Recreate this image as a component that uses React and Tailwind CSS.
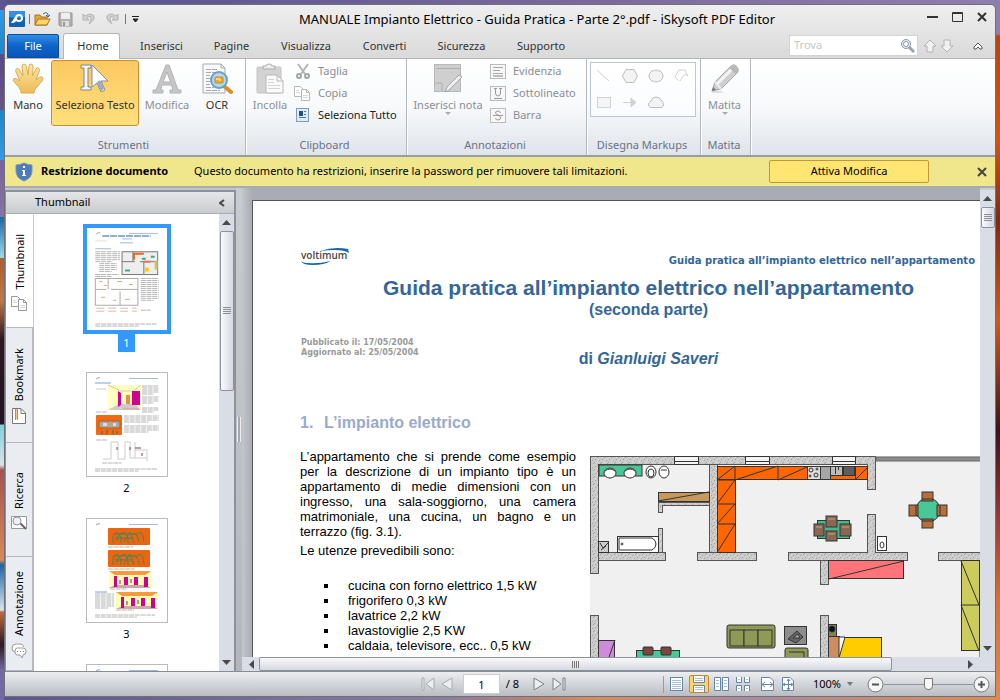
import { useState } from "react";

/* ---------------- DATA ---------------- */
const tabs = [
  { label: "Inserisci", width: "w-[73px]" },
  { label: "Pagine", width: "w-[67px]" },
  { label: "Visualizza", width: "w-[82px]" },
  { label: "Converti", width: "w-[75px]" },
  { label: "Sicurezza", width: "w-[79px]" },
  { label: "Supporto", width: "w-[80px]" },
];

const consumers = [
  "cucina con forno elettrico 1,5 kW",
  "frigorifero 0,3 kW",
  "lavatrice 2,2 kW",
  "lavastoviglie 2,5 KW",
  "caldaia, televisore, ecc.. 0,5 kW",
];

/* ---------------- TITLE BAR ICONS ---------------- */
const AppLogo = () => (
  <svg width="16" height="16" viewBox="0 0 16 16">
    <rect width="16" height="16" rx="1" fill="#1260b4" />
    <path d="M0 0H16V6Q8 8 0 6Z" fill="#3a8fd8" />
    <path
      d="M2 12L6 6Q7 3 10 3Q14 3 14 7Q14 11 10 11Q8 11 7 10Q6 12 2 12ZM8 8Q9 9 10 9Q12 9 12 7Q12 5 10 5Q8 5 8 8Z"
      fill="#fff"
      fillRule="evenodd"
    />
  </svg>
);

const OpenIcon = () => (
  <svg width="17" height="16" viewBox="0 0 17 16">
    <path d="M1 14V4H6L7 6H13V14Z" fill="#e5a93a" stroke="#a8741a" />
    <path d="M1 14L4 8H16L13 14Z" fill="#fbd36f" stroke="#a8741a" />
    <path d="M9 3Q12 0 14 3V5M12 4L14 6L16 4" fill="none" stroke="#39659c" />
  </svg>
);

const SaveIcon = () => (
  <svg width="15" height="15" viewBox="0 0 15 15">
    <path d="M1 1H14V14H2L1 13Z" fill="#b2b2b2" stroke="#929292" />
    <rect x="3" y="1" width="9" height="6" fill="#eee" />
    <rect x="4" y="9" width="7" height="5" fill="#ddd" />
    <rect x="5" y="10" width="2" height="4" fill="#999" />
  </svg>
);

const UndoIcon = () => (
  <svg width="14" height="14" viewBox="0 0 14 14">
    <path d="M1 2V8H7L5 6Q9 3 9 6Q9 9 7 12Q13 8 12 4Q9 0 3 4Z" fill="#d0d0d0" stroke="#b4b4b4" />
  </svg>
);

const RedoIcon = () => (
  <svg width="14" height="14" viewBox="0 0 14 14">
    <path d="M13 2V8H7L9 6Q5 3 5 6Q5 9 7 12Q1 8 2 4Q5 0 11 4Z" fill="#d0d0d0" stroke="#b4b4b4" />
  </svg>
);

/* ---------------- RIBBON ICONS ---------------- */
const HandIcon = () => (
  <svg width="32" height="32" viewBox="0 0 32 32">
    <defs>
      <linearGradient id="hand" x1="0" y1="0" x2="0" y2="1">
        <stop offset="0" stopColor="#fbe6a4" />
        <stop offset="1" stopColor="#eebb55" />
      </linearGradient>
    </defs>
    <path
      d="M9 28Q7 23 3 20Q0 17 2 15.500Q4 14.500 8 18L4 9Q3 6 5 5.500Q7 5 8 8L11 13L10 4Q10 1 12 1Q14 1 14.500 4L16 12L17 3Q17 1 19 1Q21 1 21 4L20.500 13L24 6Q25 4 26.500 5Q28 6 27 9L24 17Q28 13 30 14Q32 15 30 18L24 25Q22 27 22 30H9Z"
      fill="url(#hand)"
      stroke="#d8ac55"
    />
  </svg>
);

const SelectTextIcon = () => (
  <svg width="32" height="32" viewBox="0 0 32 32">
    <path d="M2 2H12V5H9V24H12V27H2V24H5V5H2Z" fill="#f4f7fa" stroke="#7b8794" />
    <path d="M13 2V24L18 20L22 29L26 27L22 18H29Z" fill="#fff" stroke="#7e8ea1" />
    <path d="M18 19L22 28L25 26L21 17Z" fill="#9aabc0" />
  </svg>
);

const EditIcon = () => (
  <svg width="32" height="32" viewBox="0 0 32 32">
    <path
      d="M15 2H18L27 27H30V30H19V27H22L20.500 22H11L9.500 27H12V30H2V27H5ZM16 9L12 19H19.500Z"
      fill="#c6c6c6"
      stroke="#b2b2b2"
      fillRule="evenodd"
    />
  </svg>
);

const OcrIcon = () => (
  <svg width="32" height="32" viewBox="0 0 32 32">
    <path d="M2 1H20L24 5V30H2Z" fill="#f8f9fa" stroke="#a5a9ae" />
    <path d="M20 1V5H24" fill="none" stroke="#a5a9ae" />
    <path d="M5 6.500H17M5 9.500H20M5 12.500H9M5 15.500H9M5 18.500H9M5 21.500H9M5 24.500H13M5 27.500H19" stroke="#a8a8a8" strokeDasharray="5 1" />
    <path d="M23 23L30 29" stroke="#e08a2a" strokeWidth="4" strokeLinecap="round" />
    <circle cx="18" cy="17" r="8" fill="#a9dcf7" stroke="#6c9fc0" strokeWidth="2" />
    <rect x="14" y="14" width="8" height="6" rx="1" fill="#f7a824" stroke="#d8821b" />
    <path d="M15 16H19V18" fill="none" stroke="#fff" />
  </svg>
);

const PasteIcon = () => (
  <svg width="32" height="32" viewBox="0 0 32 32">
    <rect x="3" y="4" width="24" height="26" rx="1" fill="#d3d3d3" stroke="#c4c4c4" />
    <path d="M9 6V3H12Q12 1 15 1Q18 1 18 3H21V6Z" fill="#eee" stroke="#aaa" />
    <path d="M12 12H23L29 18V30H12Z" fill="#fafafa" stroke="#b8b8b8" />
    <path d="M23 12V18H29" fill="none" stroke="#b8b8b8" />
    <path d="M14 16.500H20M14 19.500H20M14 22.500H26M14 25.500H26" stroke="#d4d4d4" />
  </svg>
);

const CutIcon = () => (
  <svg width="16" height="16" viewBox="0 0 16 16">
    <path d="M3 1L10 11M13 1L6 11" stroke="#b5b5b5" strokeWidth="2" />
    <circle cx="4" cy="13" r="2" fill="none" stroke="#a5a5a5" strokeWidth="2" />
    <circle cx="12" cy="13" r="2" fill="none" stroke="#a5a5a5" strokeWidth="2" />
  </svg>
);

const CopyIcon = ({ stroke = "#b8b8b8" }) => (
  <svg width="17" height="15" viewBox="0 0 17 15">
    <path d="M.5 .5H6.500L9.500 3.500V10.500H.5Z" fill="#fff" stroke={stroke} />
    <path d="M7.500 3.500H12.500L15.500 6.500V14.500H7.500Z" fill="#fff" stroke={stroke} />
    <path d="M12.500 3.500V6.500H15.500" fill="none" stroke={stroke} />
    <path d="M9 9.500H14M9 11.500H14M2 4.500H5M2 6.500H6" stroke="#d6d6d6" />
  </svg>
);

const SelectAllIcon = () => (
  <svg width="14" height="15" viewBox="0 0 14 15">
    <rect x=".5" y=".5" width="12" height="13" fill="#dfeaf6" stroke="#7f9abb" />
    <rect x="3" y="3" width="4" height="5" fill="#1f4f88" />
    <path d="M8 3.500H10M8 6.500H10M3 9.500H10" stroke="#4b76a8" />
  </svg>
);

const NoteIcon = () => (
  <svg width="32" height="32" viewBox="0 0 32 32">
    <rect x="2.500" y="1.500" width="26" height="27" fill="#cfcfcf" stroke="#b8b8b8" />
    <path d="M4 5.500H28" stroke="#b0b0b0" />
    <path d="M3 20H10V28" fill="none" stroke="#b0b0b0" />
    <path d="M13 29L15 24L27 12L30 14L17 27Z" fill="#efefef" stroke="#a5a5a5" />
  </svg>
);

const MarkBox = ({ children }) => (
  <svg width="16" height="15" viewBox="0 0 16 15">
    <rect x=".5" y=".5" width="15" height="14" fill="#f7f7f7" stroke="#bbb" />
    {children}
  </svg>
);

const PencilIcon = () => (
  <svg width="32" height="32" viewBox="0 0 32 32">
    <ellipse cx="8" cy="29" rx="6" ry="1" fill="#ddd" />
    <path d="M3 28L6 19L22 3L29 9L12 26Z" fill="#cfcfcf" stroke="#a6a6a6" />
    <path d="M8 21L23 6" stroke="#f4f4f4" strokeWidth="3" />
    <path d="M20 5L27 11L30 8Q30 4 25 1Q22 2 20 5Z" fill="#b8b8b8" />
    <path d="M3 28L4 24L7 27Z" fill="#777" />
    <path d="M6 19L12 26" stroke="#eee" strokeWidth="2" />
  </svg>
);

const ShapeGallery = () => (
  <svg width="104" height="53" viewBox="0 0 104 53" fill="none" stroke="#d2d2d2">
    <path d="M6 7L18 18" />
    <path d="M35 6.500H43L46.500 13L43 19.500H35L31.500 13Z" fill="#f3f3f3" stroke="#bdbdbd" />
    <ellipse cx="65" cy="13" rx="7" ry="6" fill="#f3f3f3" stroke="#bdbdbd" />
    <path d="M88 18L84 14L88 7H94L97 13M97 13L94 11L89 18" />
    <rect x="6.500" y="34.500" width="13" height="10" fill="#f5f5f5" />
    <path d="M32 39.500H44M40 35L45 39.500L40 44Z" fill="#d2d2d2" />
    <path d="M60 44.500Q57.500 44 57.500 42Q57.500 39 60 38Q61 34 65 34Q69 34 70 37Q72.500 39 72.500 42Q72.500 44 70 44.500Z" fill="#f3f3f3" stroke="#bdbdbd" />
  </svg>
);

/* ---------------- RIBBON PARTS ---------------- */
const RibbonGroup = ({ title, width, children }) => (
  <section className={`${width} flex shrink-0 flex-col border-r border-[#b4b8be] shadow-[1px_0_0_#fff]`}>
    <div className="flex flex-1 pt-[1px]">{children}</div>
    <h2 className="h-[19px] pr-[3px] text-center leading-[18px] text-[#6a7385]">{title}</h2>
  </section>
);

const BigButton = ({ label, icon, width, disabled, active, menu }) => (
  <button
    disabled={disabled}
    className={`${width} flex h-[66px] shrink-0 flex-col items-center rounded-[3px] border whitespace-nowrap ${
      active
        ? "border-[#c88d35] bg-gradient-to-b from-[#fcc861] to-[#ffe07c] text-[#3a3a3a]"
        : "border-transparent"
    } ${disabled ? "text-[#8b8f95]" : "text-[#333]"}`}
  >
    <span className="mt-[2px]">{icon}</span>
    <span className="mt-[3px] leading-[14px]">{label}</span>
    {menu && (
      <svg width="6" height="3" viewBox="0 0 6 3">
        <path d="M0 0H6L3 3Z" fill="#aaa" />
      </svg>
    )}
  </button>
);

const SmallButton = ({ label, icon, disabled }) => (
  <button
    disabled={disabled}
    className={`flex h-[22px] items-center gap-[7px] whitespace-nowrap ${disabled ? "text-[#8b8f95]" : "text-[#222]"}`}
  >
    <span className="flex w-[17px] justify-center">{icon}</span>
    {label}
  </button>
);

const Ribbon = () => (
  <div className="flex h-[98px] shrink-0 border-b-2 border-[#989da3] bg-gradient-to-b from-white via-[#f7f9fb] to-[#dfe4eb]">
    <RibbonGroup title="Strumenti" width="w-[241px]">
      <BigButton label="Mano" icon={<HandIcon />} width="w-[46px]" />
      <BigButton label="Seleziona Testo" icon={<SelectTextIcon />} width="w-[88px]" active />
      <BigButton label="Modifica" icon={<EditIcon />} width="w-[56px]" disabled />
      <BigButton label="OCR" icon={<OcrIcon />} width="w-[44px]" />
    </RibbonGroup>

    <RibbonGroup title="Clipboard" width="w-[161px]">
      <BigButton label="Incolla" icon={<PasteIcon />} width="w-[48px]" disabled />
      <div>
        <SmallButton label="Taglia" icon={<CutIcon />} disabled />
        <SmallButton label="Copia" icon={<CopyIcon />} disabled />
        <SmallButton label="Seleziona Tutto" icon={<SelectAllIcon />} />
      </div>
    </RibbonGroup>

    <RibbonGroup title="Annotazioni" width="w-[180px]">
      <BigButton label="Inserisci nota" icon={<NoteIcon />} width="w-[82px]" disabled menu />
      <div>
        <SmallButton
          label="Evidenzia"
          disabled
          icon={
            <MarkBox>
              <path d="M3 3.500H13M3 6.500H10M3 9.500H13" stroke="#a8a8a8" />
              <path d="M3 12H13" stroke="#bdbdbd" strokeWidth="2" />
            </MarkBox>
          }
        />
        <SmallButton
          label="Sottolineato"
          disabled
          icon={
            <MarkBox>
              <path d="M5.500 3V7Q5.500 10 8 10Q10.500 10 10.500 7V3M4 2.500H7M9 2.500H12M4 12.500H12" fill="none" stroke="#999" />
            </MarkBox>
          }
        />
        <SmallButton
          label="Barra"
          disabled
          icon={
            <MarkBox>
              <path d="M10.500 5Q10 3 8 3Q5.500 3 5.500 5Q5.500 6 8 7Q10.500 8 10.500 10Q10.500 12 8 12Q6 12 5.500 10M3 7.500H13" fill="none" stroke="#999" />
            </MarkBox>
          }
        />
      </div>
    </RibbonGroup>

    <RibbonGroup title="Disegna Markups" width="w-[114px]">
      <div className="mt-[2px] ml-[3px] h-[55px] border border-[#bcc6d4] bg-white/50">
        <ShapeGallery />
      </div>
    </RibbonGroup>

    <RibbonGroup title="Matita" width="w-[50px]">
      <BigButton label="Matita" icon={<PencilIcon />} width="w-[47px]" disabled menu />
    </RibbonGroup>
  </div>
);

/* ---------------- HEADER ---------------- */
const TitleBar = () => (
  <header className="flex h-[28px] shrink-0 items-center">
    <div className="flex w-[160px] items-center pl-[4px]">
      <AppLogo />
      <span className="mx-[4px] h-[10px] w-px bg-[#777]" />
      <button aria-label="Apri"><OpenIcon /></button>
      <button aria-label="Salva" className="ml-[7px]" disabled><SaveIcon /></button>
      <button aria-label="Annulla" className="ml-[9px]" disabled><UndoIcon /></button>
      <button aria-label="Ripristina" className="ml-[9px]" disabled><RedoIcon /></button>
      <span className="mx-[6px] h-[10px] w-px bg-[#777]" />
      <button aria-label="Personalizza barra">
        <svg width="7" height="7" viewBox="0 0 7 7">
          <path d="M0 .5H7M1 3H6L3.500 6Z" stroke="#222" fill="#222" />
        </svg>
      </button>
    </div>
    <h1 className="flex-1 truncate pr-[4px] text-center text-[13px] leading-[20px] text-black">
      MANUALE Impianto Elettrico - Guida Pratica - Parte 2°.pdf - iSkysoft PDF Editor
    </h1>
    <div className="flex w-[82px] items-center gap-[14px] pl-[14px]">
      <button aria-label="Riduci a icona">
        <svg width="11" height="14" viewBox="0 0 11 14"><path d="M0 5H11" stroke="#333" strokeWidth="2" /></svg>
      </button>
      <button aria-label="Ingrandisci">
        <svg width="11" height="14" viewBox="0 0 11 14"><path d="M.5 .5H10.500V9.500H.5ZM0 1.500H11" fill="none" stroke="#333" /></svg>
      </button>
      <button aria-label="Chiudi">
        <svg width="10" height="14" viewBox="0 0 10 14"><path d="M1 1L9 9M9 1L1 9" stroke="#333" strokeWidth="2" /></svg>
      </button>
    </div>
  </header>
);

const TabBar = () => (
  <nav className="flex h-[26px] shrink-0 items-end border-b border-[#b3b5b8] pl-[2px]">
    <button className="mr-[4px] h-[24px] w-[52px] rounded-t-[2px] border border-[#0b4c9c] bg-gradient-to-b from-[#2f8fe8] via-[#0e63c8] to-[#0a56b8] text-white">
      File
    </button>
    <button className="-mb-px mr-[5px] h-[26px] w-[57px] rounded-t-[3px] border border-b-0 border-[#b3b5b8] bg-white pl-[3px] text-[#333]">
      Home
    </button>
    {tabs.map((t) => (
      <button key={t.label} className={`${t.width} h-[24px] text-[#333]`}>
        {t.label}
      </button>
    ))}
    <div className="mr-[10px] mb-[2px] ml-auto flex items-center">
      <label className="flex h-[21px] w-[129px] items-center border border-[#d4d4d4] bg-white">
        <input
          aria-label="Trova"
          placeholder="Trova"
          className="w-0 flex-1 bg-transparent px-[4px] outline-none placeholder:text-[#c4c7cb]"
        />
        <svg width="16" height="16" viewBox="0 0 16 16" className="mr-px">
          <path d="M9 9L14 14" stroke="#9aa4b0" strokeWidth="3" />
          <circle cx="6" cy="6" r="4.500" fill="#e9eef3" stroke="#8b96a3" />
          <circle cx="6" cy="6" r="2.500" fill="#fff" stroke="#8b96a3" />
        </svg>
      </label>
      <button aria-label="Precedente" className="ml-[5px]">
        <svg width="14" height="14" viewBox="0 0 14 14">
          <path d="M7 1L13 7H10V13H4V7H1Z" fill="#f1f1f1" stroke="#b4b4b4" />
        </svg>
      </button>
      <button aria-label="Successivo" className="ml-[3px]">
        <svg width="14" height="14" viewBox="0 0 14 14">
          <path d="M7 13L13 7H10V1H4V7H1Z" fill="#f1f1f1" stroke="#b4b4b4" />
        </svg>
      </button>
      <button aria-label="Riduci barra" className="ml-[19px] mr-[2px]">
        <svg width="10" height="8" viewBox="0 0 10 8">
          <path d="M5 1L9 5V7H7L5 5L3 7H1V5Z" fill="#fff" stroke="#555" />
        </svg>
      </button>
    </div>
  </nav>
);

const RestrictionBar = () => (
  <div className="flex h-[31px] shrink-0 items-center border-b-2 border-[#a9abb2] bg-[#f0e68c] pr-[8px] pl-[10px] text-black">
    <svg width="18" height="20" viewBox="0 0 18 20">
      <path d="M9 1Q13 3 17 3V9Q17 16 9 19Q1 16 1 9V3Q5 3 9 1Z" fill="#4d7cbc" stroke="#7b96bd" />
      <path d="M8 4H10V6H8ZM7 8H10V13H11V14H7V13H8V9H7Z" fill="#fff" />
    </svg>
    <strong className="ml-[8px] w-[153px] whitespace-nowrap">Restrizione documento</strong>
    <span className="min-w-0 flex-1 truncate">
      Questo documento ha restrizioni, inserire la password per rimuovere tali limitazioni.
    </span>
    <button className="h-[23px] w-[160px] rounded-[2px] border border-[#c4953a] bg-[#ffe673]">
      Attiva Modifica
    </button>
    <button aria-label="Chiudi avviso" className="ml-[48px]">
      <svg width="10" height="10" viewBox="0 0 10 10"><path d="M1 1L9 9M9 1L1 9" stroke="#444" strokeWidth="2" /></svg>
    </button>
  </div>
);

/* ---------------- SCROLLBARS ---------------- */
const Arrow = ({ d }) => (
  <svg width="9" height="9" viewBox="0 0 9 9" className="shrink-0">
    <path d={d} fill="#4a4a4a" />
  </svg>
);

const UP = "M0 7L4.500 2L9 7Z";
const DOWN = "M0 2H9L4.500 7Z";

const VScroll = ({ thumb }) => (
  <div className="flex w-[15px] shrink-0 flex-col items-center bg-[#d8dde6]">
    <button aria-label="Su" className="flex h-[17px] items-center"><Arrow d={UP} /></button>
    <div className="w-full flex-1">
      <div className={`${thumb} mx-auto flex w-[14px] items-center justify-center rounded-[2px] border border-[#8b929d] bg-gradient-to-r from-[#f9fafb] to-[#d3d8e0]`}>
        <svg width="8" height="8" viewBox="0 0 8 8"><path d="M0 .5H8M0 2.500H8M0 4.500H8M0 6.500H8" stroke="#8a8f98" /></svg>
      </div>
    </div>
    <button aria-label="Giù" className="flex h-[17px] items-center"><Arrow d={DOWN} /></button>
  </div>
);

/* ---------------- THUMBNAILS ---------------- */
// runs of grey text lines, [x, y, width, number of lines]
const Lines = ({ blocks }) =>
  blocks.map(([x, y, w, n]) =>
    Array.from({ length: n }, (_, i) => (
      <path key={`${x}-${y}-${i}`} d={`M${x} ${y + i * 2}h${i === n - 1 ? w * 0.7 : w}`} stroke="#b4b4b4" strokeDasharray="5 .7" />
    ))
  );

const PageHeader = () => (
  <>
    <path d="M9 6Q11 4 13 5" stroke="#8aa6c4" fill="none" />
    <path d="M42 5.500H71" stroke="#a3bbd8" />
  </>
);

const ThumbOne = () => (
  <svg viewBox="0 0 80 103" className="h-full w-full bg-white">
    <PageHeader />
    <path d="M15 8H64" stroke="#8fb0d6" strokeWidth="2" strokeDasharray="7 1" />
    <path d="M35 11H45M33 15H46M8 21H24" stroke="#9cb8da" />
    <path d="M8 13H19" stroke="#ddd" />
    <Lines blocks={[[8, 24, 25, 6], [12, 36, 18, 5], [8, 47, 24, 2], [54, 51, 18, 12], [8, 97, 62, 2], [54, 83, 14, 1]]} />
    <rect x="35" y="24" width="36" height="23" fill="#eee" stroke="#777" />
    <path d="M35 34H48M53 34H71M46 24V34M57 34V47" stroke="#777" />
    <path d="M47 32V26H57" stroke="#e66a1e" fill="none" strokeWidth="2" />
    <rect x="57" y="33" width="7" height="2" fill="#e66" />
    <rect x="68" y="33" width="3" height="9" fill="#c4c45c" />
    <rect x="58" y="40" width="4" height="4" fill="#ffcc00" />
    <path d="M38 43h5M55 31h4M64 29h4" stroke="#3ab083" strokeWidth="2" />
    <rect x="8" y="51" width="43" height="27" fill="#fff" stroke="#aaa" />
    <path d="M8 62H19M24 62H51M21 51V62M33 64V78" stroke="#aaa" />
    <path d="M12 54h3M17 58h3M30 54h5M42 57h4M14 70h4M26 73h3M38 72h5" stroke="#e7a27c" />
    <path d="M9 81H50M9 84H50" stroke="#dfb8ab" strokeDasharray="8 4" />
  </svg>
);

const ThumbTwo = () => (
  <svg viewBox="0 0 80 103" className="h-full w-full bg-white">
    <PageHeader />
    <path d="M8 10H24" stroke="#7ea2cd" />
    <path d="M9 16H19" stroke="#ccc" />
    <rect x="21" y="12" width="33" height="25" fill="#ffffc2" />
    <path d="M21 37L32 31H48L54 37Z" fill="#ccc" />
    <path d="M21 12L34 18M54 12L46 18M34 18H46V31" fill="none" stroke="#cfcfa8" />
    <path d="M31 18L34 20V32L31 34ZM45 18H53V32H45Z" fill="#d4008f" />
    <rect x="39" y="22" width="4" height="9" fill="#e98c48" />
    <path d="M36 36H52" stroke="#d99" />
    <rect x="9" y="42" width="26" height="20" rx="1" fill="#f06a14" />
    <path d="M12 48H33V55H12Z" fill="#b5a596" stroke="#a4622f" />
    <path d="M16 50H20V53H16ZM26 50H29V53H26Z" fill="#ddd" />
    <path d="M15 58V61M20 57V61M26 57V61M30 58V61" stroke="#655" />
    <Lines blocks={[[55, 13, 17, 5], [55, 24, 17, 4], [55, 35, 17, 3], [37, 43, 35, 4], [37, 53, 35, 4], [9, 39, 15, 1], [9, 67, 16, 1], [15, 90, 28, 1], [8, 96, 62, 2]]} />
    <path d="M16 86H24V69H31V86H38V69H43V85H60M48 69V85M48 77H60V88" fill="none" stroke="#ccc" />
    <path d="M30 74V77M43 74V77M55 80V83M48 75H54" stroke="#745" />
  </svg>
);

const Room = ({ y, x }) => (
  <g transform={`translate(${x} ${y})`}>
    <rect width="42" height="17" fill="#ffffb8" />
    <path d="M0 0H42L36 4H6Z" fill="#fb9a3c" />
    <path d="M0 17L6 14H36L42 17Z" fill="#c9a9a9" />
    <path d="M5 5H8V16H5ZM15 6H19V14H15ZM25 6H29V14H25ZM35 6H39V16H35Z" fill="#cf008b" />
    <path d="M11 9V13M22 8V12" stroke="#d88" strokeWidth="2" />
  </g>
);

const Junction = ({ y }) => (
  <g transform={`translate(21 ${y})`}>
    <rect width="42" height="17" rx="1" fill="#ee6510" />
    <path
      d="M5 15V8L9 4L13 9V15M8 13L12 6L17 4L20 10V15M16 14L22 4L26 15M24 7Q29 3 31 14M30 5Q35 2 36 14M5 6H30M7 10H24"
      fill="none"
      stroke="#47855a"
    />
  </g>
);

const ThumbThree = () => (
  <svg viewBox="0 0 80 103" className="h-full w-full bg-white">
    <PageHeader />
    <Junction y={9} />
    <Junction y={31} />
    <Room x={22} y={52} />
    <Room x={29} y={73} />
    <Lines blocks={[[21, 28, 36, 1], [21, 50, 38, 1], [23, 70, 25, 1], [8, 75, 19, 8], [29, 91, 26, 1], [8, 96, 60, 2]]} />
    <path d="M8 73H20" stroke="#7ea2cd" />
  </svg>
);

const thumbs = [ThumbOne, ThumbTwo, ThumbThree];

const sideTabs = [
  {
    label: "Thumbnail",
    icon: <CopyIcon stroke="#999" />,
  },
  {
    label: "Bookmark",
    icon: (
      <svg width="15" height="17" viewBox="0 0 15 17">
        <path d="M.5 .5H9L13.500 5V15.500H.5Z" fill="#fff" stroke="#777" />
        <path d="M9 1V5.500H14" fill="none" stroke="#777" />
        <path d="M3.500 1V12M5.500 1V12" stroke="#e98322" />
        <path d="M4.500 1V11" stroke="#f9c48a" />
      </svg>
    ),
  },
  {
    label: "Ricerca",
    icon: (
      <svg width="16" height="14" viewBox="0 0 16 14">
        <path d="M.5 .5H15.500V12.500H.5Z" fill="#fff" stroke="#999" />
        <path d="M9 7L15 13" stroke="#666" strokeWidth="2" />
        <circle cx="6" cy="5" r="4" fill="#edf2f8" stroke="#8b96a5" />
      </svg>
    ),
  },
  {
    label: "Annotazione",
    icon: (
      <svg width="16" height="16" viewBox="0 0 16 16" fill="#fff" stroke="#9a9a9a">
        <path d="M4 9Q1 9 1 5Q1 1 5 1H9Q12 1 13 4" />
        <path d="M6 5H12Q15 5 15 8.500Q15 12 12 12L11 15L9 12H6Q4 12 4 8.500Q4 5 6 5Z" />
        <path d="M6 8.500H7M9 8.500H10M12 8.500H13" stroke="#777" />
      </svg>
    ),
  },
];

const SidePanel = ({ page, setPage }) => {
  const [tab, setTab] = useState("Thumbnail");

  return (
    <aside className="mt-[2px] flex w-[231px] shrink-0 flex-col border-t-2 border-r-2 border-l border-[#8c929c] bg-white">
      <div className="flex h-[22px] shrink-0 items-center justify-between border-b border-[#aaaeb4] bg-gradient-to-b from-[#e5e6e8] to-[#c9cbce] pr-[9px] pl-[29px]">
        <h2 className="text-[11px] text-black">Thumbnail</h2>
        <button aria-label="Chiudi pannello">
          <svg width="6" height="8" viewBox="0 0 6 8"><path d="M5 1L1 4L5 7" fill="none" stroke="#444" strokeWidth="2" /></svg>
        </button>
      </div>
      <div className="flex min-h-0 flex-1">
        <div className="flex w-[28px] shrink-0 flex-col">
          {sideTabs.map((t) => (
            <button
              key={t.label}
              onClick={() => setTab(t.label)}
              className={`flex min-h-0 flex-1 flex-col items-center justify-center gap-[7px] border-b border-[#b5b9c1] pt-[4px] text-[11px] text-black ${
                tab === t.label ? "border-r border-r-[#c8cbd0] bg-white" : "border-r-2 bg-[#e9ecf1]"
              }`}
            >
              <span className="rotate-180 leading-[16px] [writing-mode:vertical-rl]">{t.label}</span>
              {t.icon}
            </button>
          ))}
        </div>
        <div className="flex min-w-0 flex-1 flex-col items-center overflow-hidden pt-[10px]">
          {thumbs.map((Thumb, i) => (
            <button key={i} onClick={() => setPage(i + 1)} className="flex h-[146px] shrink-0 flex-col items-center">
              <span
                className={`block ${
                  page === i + 1 ? "h-[110px] w-[88px] border-4 border-[#3399ff]" : "mt-[2px] mb-px h-[105px] w-[82px] border border-[#bbb]"
                }`}
              >
                <Thumb />
              </span>
              <span className={`px-[5px] leading-[18px] ${page === i + 1 ? "bg-[#3399ff] text-white" : "mt-px text-black"}`}>
                {i + 1}
              </span>
            </button>
          ))}
          <button aria-label="Pagina 4" onClick={() => setPage(4)} className="mt-[2px] h-[105px] w-[82px] shrink-0 border border-[#bbb]">
            <svg viewBox="0 0 80 103" className="h-full w-full"><PageHeader /></svg>
          </button>
        </div>
        <VScroll thumb="h-[160px]" />
      </div>
    </aside>
  );
};

/* ---------------- FLOOR PLAN ---------------- */
// [x, y, width, height]
const walls = [
  [0, 0, 8, 117], [0, 159, 8, 50], [0, 0, 285, 8], [119, 8, 8, 88], [8, 96, 67, 8],
  [107, 96, 59, 8], [198, 96, 119, 8], [348, 96, 60, 8], [277, 0, 8, 33], [277, 58, 8, 39],
  [230, 104, 8, 24], [230, 159, 8, 50], [68, 46, 51, 3], [68, 46, 4, 10], [68, 72, 4, 24],
];

const chairs = [
  [236, 60, 11, 11], [236, 75, 11, 10], [224, 68, 10, 12], [250, 68, 11, 12],
];

const FloorPlan = () => (
  <svg width="440" height="210" viewBox="0 0 440 210" className="shrink-0" stroke="#333">
    <defs>
      <pattern id="concrete" width="7" height="7" patternUnits="userSpaceOnUse">
        <rect width="7" height="7" fill="#cbcbcb" stroke="none" />
        <path d="M0 1.500h1M3 .5h1M5 3.500h1M2 4.500h1M4 6.500h1" stroke="#a2a2a2" />
        <path d="M1 3.500h1M5 1.500h1M0 5.500h1" stroke="#e2e2e2" />
      </pattern>
    </defs>
    <rect width="440" height="210" fill="#f0f0f0" stroke="none" />
    {walls.map(([x, y, w, h]) => (
      <rect key={`${x}-${y}-${w}`} x={x + 0.5} y={y + 0.5} width={w} height={h} fill="#ccc" stroke="#555" />
    ))}
    {walls.map(([x, y, w, h]) => (
      <rect key={`f${x}-${y}-${w}`} x={x + 1} y={y + 1} width={w - 1} height={h - 1} fill="url(#concrete)" stroke="none" />
    ))}
    <rect x="286" y="1" width="154" height="4" fill="#8c8c8c" stroke="#666" />

    {/* windows */}
    <path d="M84.500 .5H108.500V8.500H84.500ZM155.500 .5H179.500V8.500H155.500ZM242.500 .5H265.500V8.500H242.500Z" fill="#f4f4f4" />
    <path d="M84 5.500H108M155 5.500H179M242 5.500H265" />

    {/* bathroom */}
    <rect x="9" y="9" width="43" height="11" fill="#48c898" />
    <g fill="#fff">
      <ellipse cx="20" cy="17" rx="6" ry="5" />
      <ellipse cx="40" cy="17" rx="6" ry="5" />
      <ellipse cx="61" cy="16" rx="5" ry="6" />
      <ellipse cx="74" cy="16" rx="5" ry="6" />
      <ellipse cx="61" cy="17" rx="3" ry="4" />
      <path d="M71 14H77M15 15Q20 11 25 15M35 15Q40 11 45 15" fill="none" />
      <rect x="27.500" y="80.500" width="41" height="16" />
      <path d="M29 82H62Q66 84 66 88Q66 92 62 94H29Z" />
      <circle cx="32" cy="88" r="1" />
      <rect x="8.500" y="85.500" width="10" height="11" fill="#ccc" />
      <path d="M10 87L13 92L18 87M11 94L16 90" fill="none" />
    </g>
    <rect x="68.500" y="36.500" width="51" height="9" fill="#c8995c" />
    <path d="M68 45L119 36" />

    {/* kitchen */}
    <g fill="#ff6600">
      <rect x="127.500" y="10.500" width="18" height="86" />
      <rect x="127.500" y="10.500" width="90" height="13" />
      <rect x="265.500" y="10.500" width="12" height="13" />
      <rect x="240.500" y="19.500" width="25" height="4" />
    </g>
    <path d="M127 24L145 10V24L188 10V24L217 11M127 24H145M127 48L145 24M127 48H145M127 68L145 48M127 68H145M128 95L145 68M265 24L278 11" fill="none" />
    <rect x="217.500" y="10.500" width="13" height="13" fill="#ddd" />
    <g fill="none">
      <circle cx="221" cy="14" r="2" />
      <circle cx="227" cy="13" r="1" />
      <circle cx="220" cy="20" r="1" />
      <circle cx="226" cy="19" r="2" />
    </g>
    <rect x="230.500" y="10.500" width="10" height="13" fill="#a6a6a6" />
    <rect x="240.500" y="10.500" width="12" height="9" fill="#bbb" />
    <rect x="253.500" y="10.500" width="11" height="9" fill="#5e5e5e" />
    <path d="M245.500 10V18M248.500 10V14" />

    {/* dining tables */}
    <rect x="227.500" y="64.500" width="32" height="18" fill="#48b88c" />
    {chairs.map(([x, y, w, h]) => (
      <g key={`${x}-${y}`}>
        <rect x={x} y={y} width={w} height={h} fill="#8a6854" />
        <path d={`M${x + 2} ${y + 3}h${w - 4}`} stroke="#a88670" strokeWidth="2" />
      </g>
    ))}
    <circle cx="338" cy="54" r="12" fill="#48c898" />
    <g fill="#b5703c">
      <rect x="332" y="36" width="11" height="9" />
      <rect x="332" y="63" width="11" height="9" />
      <rect x="319" y="49" width="9" height="11" />
      <rect x="347" y="49" width="10" height="11" />
    </g>
    <path d="M332 43H343M332 65H343M326 49V60M350 49V60" fill="none" />

    {/* bedroom and wardrobes */}
    <rect x="287.500" y="80.500" width="9" height="14" fill="#fff" />
    <ellipse cx="292" cy="89" rx="2" ry="3" fill="none" />
    <rect x="238.500" y="104.500" width="75" height="18" fill="#ff7478" />
    <path d="M239 123L314 105" />
    <rect x="371.500" y="104.500" width="18" height="90" fill="#cccc5c" />
    <path d="M371 105L389 149H371L389 195M390 105V210" fill="none" />
    <rect x="238.500" y="168.500" width="8" height="12" fill="#768754" />
    <circle cx="242" cy="173" r="3" fill="#111" />
    <rect x="238.500" y="180.500" width="11" height="28" fill="#cc8e60" />
    <rect x="249.500" y="181.500" width="42" height="28" fill="#ffcc00" />
    <path d="M249 181H255L249 202Z" fill="#fff" />

    {/* living room */}
    <g fill="#8f9a57">
      <rect x="137" y="169" width="48" height="23" rx="2" />
      <rect x="140" y="174" width="14" height="16" />
      <rect x="154" y="174" width="14" height="16" />
      <rect x="168" y="174" width="14" height="16" />
      <rect x="195" y="192" width="23" height="18" rx="2" />
      <path d="M199 196H214V209" />
    </g>
    <rect x="194.500" y="170.500" width="22" height="18" fill="#8c8c8c" />
    <path d="M198 183L207 175L213 181L206 187Z" fill="#666" />
    <path d="M203 182L208 178L210 182Z" fill="#aaa" />
    <rect x="8.500" y="184.500" width="16" height="24" fill="#cf8bdb" />
    <path d="M18 204L25 184" />
    <rect x="46.500" y="194.500" width="43" height="15" fill="#48c898" />
    <rect x="53" y="191" width="10" height="8" rx="1" fill="#7c453e" />
    <rect x="71" y="191" width="10" height="8" rx="1" fill="#7c453e" />
  </svg>
);

/* ---------------- DOCUMENT ---------------- */
const Voltimum = () => (
  <svg width="50" height="20" viewBox="0 0 50 20">
    <path d="M20 4Q34 -1 48 2L49 6Q42 1 20 4Z" fill="#1467ae" />
    <path d="M1 14Q2 18 13 18Q24 18 31 14Q18 17 8 16Q3 16 1 14Z" fill="#1467ae" />
    <text x="1" y="12" fontSize="10" fontWeight="600" fill="#4c4545" fontFamily="Open Sans, sans-serif">
      voltimum
    </text>
  </svg>
);

const DocumentPage = () => (
  <article className="h-full w-[792px] overflow-hidden border-t border-l border-[#555] bg-white px-[47px] pt-[45px] font-['Liberation_Sans',sans-serif] text-[#336699]">
    <div className="flex items-center justify-between">
      <Voltimum />
      <p className="pt-[9px] pr-[22px] font-['DejaVu_Sans',Verdana,sans-serif] text-[10px] leading-[12px] font-bold whitespace-nowrap">
        Guida pratica all’impianto elettrico nell’appartamento
      </p>
    </div>
    <h2 className="mt-[8px] text-center text-[21px] leading-[26px] font-bold whitespace-nowrap">
      Guida pratica all’impianto elettrico nell’appartamento
    </h2>
    <p className="text-center text-[16px] leading-[18px] font-bold">(seconda parte)</p>
    <div className="mt-[19px] h-[20px] pl-px font-['DejaVu_Sans',Verdana,sans-serif] text-[8px] leading-[10px] font-bold text-[#999]">
      <p>Pubblicato il: 17/05/2004</p>
      <p>Aggiornato al: 25/05/2004</p>
    </div>
    <p className="-mt-[8px] text-center text-[16px] leading-[18px] font-bold">
      di <em>Gianluigi Saveri</em>
    </p>
    <h3 className="mt-[45px] flex text-[16px] leading-[20px] font-bold text-[#99aad0]">
      <span className="w-[24px]">1.</span>L’impianto elettrico
    </h3>
    <div className="mt-[16px] flex items-start">
      <div className="mr-[14px] w-[276px] shrink-0 text-[13px] leading-[15px] text-black">
        <p className="text-justify">
          L’appartamento che si prende come esempio per la descrizione di un impianto tipo è un appartamento di
          medie dimensioni con un ingresso, una sala-soggiorno, una camera matrimoniale, una cucina, un bagno e un
          terrazzo (fig. 3.1).
        </p>
        <p className="mt-[4px]">Le utenze prevedibili sono:</p>
        <ul className="mt-[20px] pl-[24px]">
          {consumers.map((c) => (
            <li key={c} className="flex items-center whitespace-nowrap">
              <span className="mr-[20px] h-[4px] w-[4px] bg-black" />
              {c}
            </li>
          ))}
        </ul>
      </div>
      <div className="mt-[7px]">
        <FloorPlan />
      </div>
    </div>
  </article>
);

const DocumentPane = () => (
  <main className="flex min-w-0 flex-1 bg-gradient-to-b from-[#c9cccf] to-[#b3b7bc]">
    <div className="flex w-[6px] shrink-0 items-center justify-center">
      <span className="h-[25px] w-[4px] border-x border-[#eee] bg-[#a5a9af]" />
    </div>
    <div className="flex min-w-0 flex-1 flex-col">
      <div className="flex min-h-0 flex-1">
        <div className="min-w-0 flex-1 overflow-hidden bg-gradient-to-r from-[#c3c7cb] to-[#a9adb3] to-[10px] pt-[12px] pl-[10px]">
          <DocumentPage />
        </div>
        <div className="flex pt-[2px]">
          <VScroll thumb="h-[21px]" />
        </div>
      </div>
      <div className="flex h-[14px] shrink-0 items-center bg-[#d8dde6] pr-[20px] pl-[5px]">
        <button aria-label="Sinistra"><Arrow d="M7 0V9L2 4.500Z" /></button>
        <div className="ml-[3px] flex h-full w-[87%] items-center justify-center rounded-[2px] border border-[#8b929d] bg-gradient-to-b from-[#f8f9fb] to-[#d5dae2]">
          <svg width="8" height="7" viewBox="0 0 8 7"><path d="M.5 0V7M2.500 0V7M4.500 0V7M6.500 0V7" stroke="#777" /></svg>
        </div>
        <button aria-label="Destra" className="ml-auto"><Arrow d="M2 0V9L7 4.500Z" /></button>
      </div>
    </div>
  </main>
);

/* ---------------- STATUS BAR ---------------- */
const NavIcon = ({ d, off }) => (
  <svg width="14" height="14" viewBox="0 0 14 14">
    <path d={d} fill="#eceef0" stroke={off ? "#a8abb0" : "#7d8186"} strokeLinejoin="round" />
  </svg>
);

const ViewIcon = ({ children }) => (
  <svg width="16" height="16" viewBox="0 0 16 16" fill="#fff" stroke="#6585ab">
    {children}
  </svg>
);

const StatusBar = ({ page, setPage }) => {
  const [zoom, setZoom] = useState(50);

  return (
    <footer className="flex h-[25px] shrink-0 items-center border-t border-[#878c94] bg-gradient-to-b from-[#eceef0] to-[#b9bdc3] text-[11px] text-black">
      <div className="ml-[42%] flex items-center">
        <button aria-label="Prima pagina"><NavIcon d="M1 1H3V13H1ZM13 1V13L5 7Z" off /></button>
        <button aria-label="Pagina precedente" className="ml-[6px]"><NavIcon d="M11 1V13L1 7Z" off /></button>
        <input
          aria-label="Pagina"
          value={page}
          onChange={(e) => setPage(Number(e.target.value) || 1)}
          className="ml-[8px] h-[20px] w-[37px] border border-[#ccc] bg-white text-center"
        />
        <span className="ml-[6px] w-[26px]">/ 8</span>
        <button aria-label="Pagina successiva"><NavIcon d="M2 1V13L12 7Z" /></button>
        <button aria-label="Ultima pagina" className="ml-[6px]"><NavIcon d="M1 1V13L9 7ZM11 1H13V13H11Z" /></button>
      </div>
      <div className="mr-[5px] ml-auto flex items-center">
        <span className="mr-[4px] h-[17px] w-px bg-[#969ba2]" />
        <button aria-label="Pagina singola">
          <ViewIcon>
            <rect x="2.500" y="1.500" width="12" height="13" />
            <path d="M4 4.500H13M4 6.500H13M4 8.500H13M4 10.500H13M4 12.500H13" stroke="#a9bcd4" />
          </ViewIcon>
        </button>
        <button aria-label="Continua" className="ml-[5px] rounded-[2px] border border-[#c48a2c] bg-[#ffd367] px-px">
          <ViewIcon>
            <path d="M2.500 0V6.500H13.500V0M2.500 16V9.500H13.500V16" />
            <path d="M4 2.500H12M4 4.500H12M4 11.500H12M4 13.500H12" stroke="#a9bcd4" />
          </ViewIcon>
        </button>
        <button aria-label="Doppia pagina" className="ml-[4px]">
          <ViewIcon>
            <path d="M1.500 1.500H7.500V14.500H1.500ZM9.500 1.500H15.500V14.500H9.500Z" />
            <path d="M3 4.500H6M3 7.500H6M3 10.500H6M11 4.500H14M11 7.500H14M11 10.500H14" stroke="#a9bcd4" />
          </ViewIcon>
        </button>
        <button aria-label="Doppia continua" className="ml-[6px]">
          <ViewIcon>
            <path d="M1.500 1V6.500H6.500V1M9.500 1V6.500H14.500V1M1.500 15V9.500H6.500V15M9.500 15V9.500H14.500V15" />
            <path d="M3 3.500H5M11 3.500H13M3 12.500H5M11 12.500H13" stroke="#a9bcd4" />
          </ViewIcon>
        </button>
        <button aria-label="Adatta larghezza" className="ml-[9px]">
          <ViewIcon>
            <path d="M1.500 1.500H10L13.500 5V14.500H1.500Z" />
            <path d="M2 8.500H13M5 6L2 8.500L5 11M10 6L13 8.500L10 11" fill="none" />
          </ViewIcon>
        </button>
        <button aria-label="Adatta pagina" className="ml-[4px]">
          <ViewIcon>
            <path d="M2.500 1.500H10L13.500 5V14.500H2.500Z" />
            <path d="M3 8.500H13M8.500 3V14M7 5L8.500 3L10 5M7 12L8.500 14L10 12M5 7L3 8.500L5 10M11 7L13 8.500L11 10" fill="none" />
          </ViewIcon>
        </button>
        <button className="ml-[17px] flex items-center gap-[6px]">
          100%
          <svg width="6" height="4" viewBox="0 0 6 4"><path d="M0 0H6L3 4Z" fill="#777" /></svg>
        </button>
        <button aria-label="Riduci" className="ml-[14px]" onClick={() => setZoom(Math.max(0, zoom - 10))}>
          <svg width="17" height="17" viewBox="0 0 17 17">
            <circle cx="8.500" cy="8.500" r="7.500" fill="#f4f5f7" stroke="#777" />
            <path d="M5 8.500H12" stroke="#555" strokeWidth="2" />
          </svg>
        </button>
        <input
          type="range"
          aria-label="Zoom"
          value={zoom}
          onChange={(e) => setZoom(Number(e.target.value))}
          className="h-[14px] w-[89px] appearance-none bg-[linear-gradient(#8e959e,#8e959e)] bg-[length:100%_1px] bg-center bg-no-repeat [&::-webkit-slider-thumb]:h-[12px] [&::-webkit-slider-thumb]:w-[9px] [&::-webkit-slider-thumb]:appearance-none [&::-webkit-slider-thumb]:rounded-b-[4px] [&::-webkit-slider-thumb]:border [&::-webkit-slider-thumb]:border-[#777] [&::-webkit-slider-thumb]:bg-[#f6f7f8]"
        />
        <button aria-label="Aumenta" onClick={() => setZoom(Math.min(100, zoom + 10))}>
          <svg width="17" height="17" viewBox="0 0 17 17">
            <circle cx="8.500" cy="8.500" r="7.500" fill="#f4f5f7" stroke="#777" />
            <path d="M5 8.500H12M8.500 5V12" stroke="#555" strokeWidth="2" />
          </svg>
        </button>
      </div>
    </footer>
  );
};

/* ---------------- APP ---------------- */
const App = () => {
  const [page, setPage] = useState(1);

  return (
    <div className="h-screen bg-[linear-gradient(90deg,#55508e,#7c6a9b_60%,#8f7fae)] font-['Noto_Sans',sans-serif]">
      <div className="h-full bg-[linear-gradient(#5d5492_10px,#2f9be0_10px,#1b86cc_54px,#584a86_54px,#6b5584_110px,#1b86cc_110px,#2f9be0_160px,#77629a_160px,#8674a4_217px,#1a66a8_217px,#9adbe5_258px,#b05a30_258px,#c07848_300px,#2a1720_340px,#241424_424px,#7fd0dc_425px,#d8e4e6_465px,#a94f50_470px,#d88a58_560px,#1a66a8_565px,#d8e4e6_610px,#c06a40_612px,#2a1a24_645px,#7468a0_670px)] bg-[length:5px_100%] bg-no-repeat">
        <div className="h-full bg-[linear-gradient(#8f7fae_34px,#b8450f_36px,#d2560f_140px,#7c2c10_220px,#cf5a18_320px,#3c1418_430px,#8a2f30_500px,#d9702f_600px,#e08a50)] bg-[length:5px_100%] bg-right bg-no-repeat px-[4px] pt-[4px]">
          <div className="flex h-full flex-col bg-[linear-gradient(90deg,#5d5590,#8f7c9c_45%,#d98b5a_60%,#a98ba0_75%,#e08a50)] bg-[length:100%_20px] bg-bottom bg-no-repeat pb-[3px]">
            <div className="flex min-h-0 flex-1 flex-col overflow-hidden rounded-t-[5px] border border-[#6d7178] bg-gradient-to-b from-[#efefef] to-[#d9d9d9] to-[54px] text-[11px]">
              <TitleBar />
              <TabBar />
              <Ribbon />
              <RestrictionBar />
              <div className="flex min-h-0 flex-1 bg-[#c2c6ca]">
                <SidePanel page={page} setPage={setPage} />
                <DocumentPane />
              </div>
              <StatusBar page={page} setPage={setPage} />
            </div>
          </div>
        </div>
      </div>
    </div>
  );
};

export default App;
